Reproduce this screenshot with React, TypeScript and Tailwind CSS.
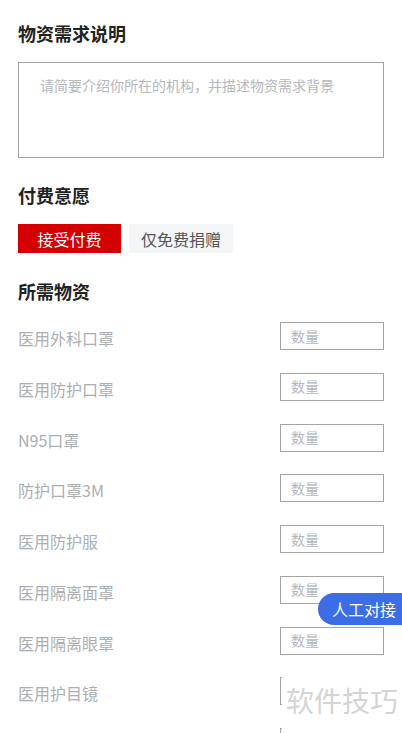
import React from 'react'

const items = [
  '医用外科口罩',
  '医用防护口罩',
  'N95口罩',
  '防护口罩3M',
  '医用防护服',
  '医用隔离面罩',
  '医用隔离眼罩',
  '医用护目镜',
  '医用手套',
]

const font = { fontFamily: '"Noto Sans CJK SC", "Noto Sans", sans-serif' }

export default function App() {
  return (
    <div className="relative h-[733px] w-[402px] overflow-hidden bg-white" style={font}>
      <div className="flex flex-col px-[18px] pt-[21px]">
        <h2 className="text-[18px] font-bold leading-6 text-[#222]">物资需求说明</h2>
        <div className="mt-[17px] h-[96px] border border-[#a4a4a4] pl-[21px] pt-[13px]">
          <p className="text-[14px] leading-[18px] text-[#b4b7bc]">请简要介绍你所在的机构，并描述物资需求背景</p>
        </div>

        <h2 className="mt-[25px] text-[18px] font-bold leading-6 text-[#222]">付费意愿</h2>
        <div className="mt-[17px] flex gap-2">
          <button className="flex h-[29px] w-[103px] items-center justify-center bg-[#d40000] text-[16px] text-white">
            接受付费
          </button>
          <button className="flex h-[29px] w-[104px] items-center justify-center bg-[#f4f5f7] text-[16px] text-[#555]">
            仅免费捐赠
          </button>
        </div>

        <h2 className="mt-[26px] text-[18px] font-bold leading-6 text-[#222]">所需物资</h2>
        <div className="mt-[19px] flex flex-col gap-[22.75px]">
          {items.map((name) => (
            <div key={name} className="flex h-[28px] items-center justify-between">
              <span className="pt-[4px] text-[16px] text-[#abaeb3]">{name}</span>
              <div className="flex h-[28px] w-[104px] items-center border border-[#a4a4a4] pl-[10px]">
                <span className="text-[14px] text-[#b4b7bc]">数量</span>
              </div>
            </div>
          ))}
        </div>
      </div>

      {/* floating contact button */}
      <div className="absolute right-0 top-[593px] flex h-[32px] w-[84px] items-center justify-end rounded-l-full bg-[#3b6ee6] pr-[6px] text-[16px] text-white">
        人工对接
      </div>

      {/* watermark */}
      <div className="absolute bottom-0 left-[282px] right-0 top-[668px] bg-white">
        <span className="absolute left-[4px] top-[16px] text-[28px] leading-8 text-[#d4d4d4]">软件技巧</span>
      </div>
    </div>
  )
}
